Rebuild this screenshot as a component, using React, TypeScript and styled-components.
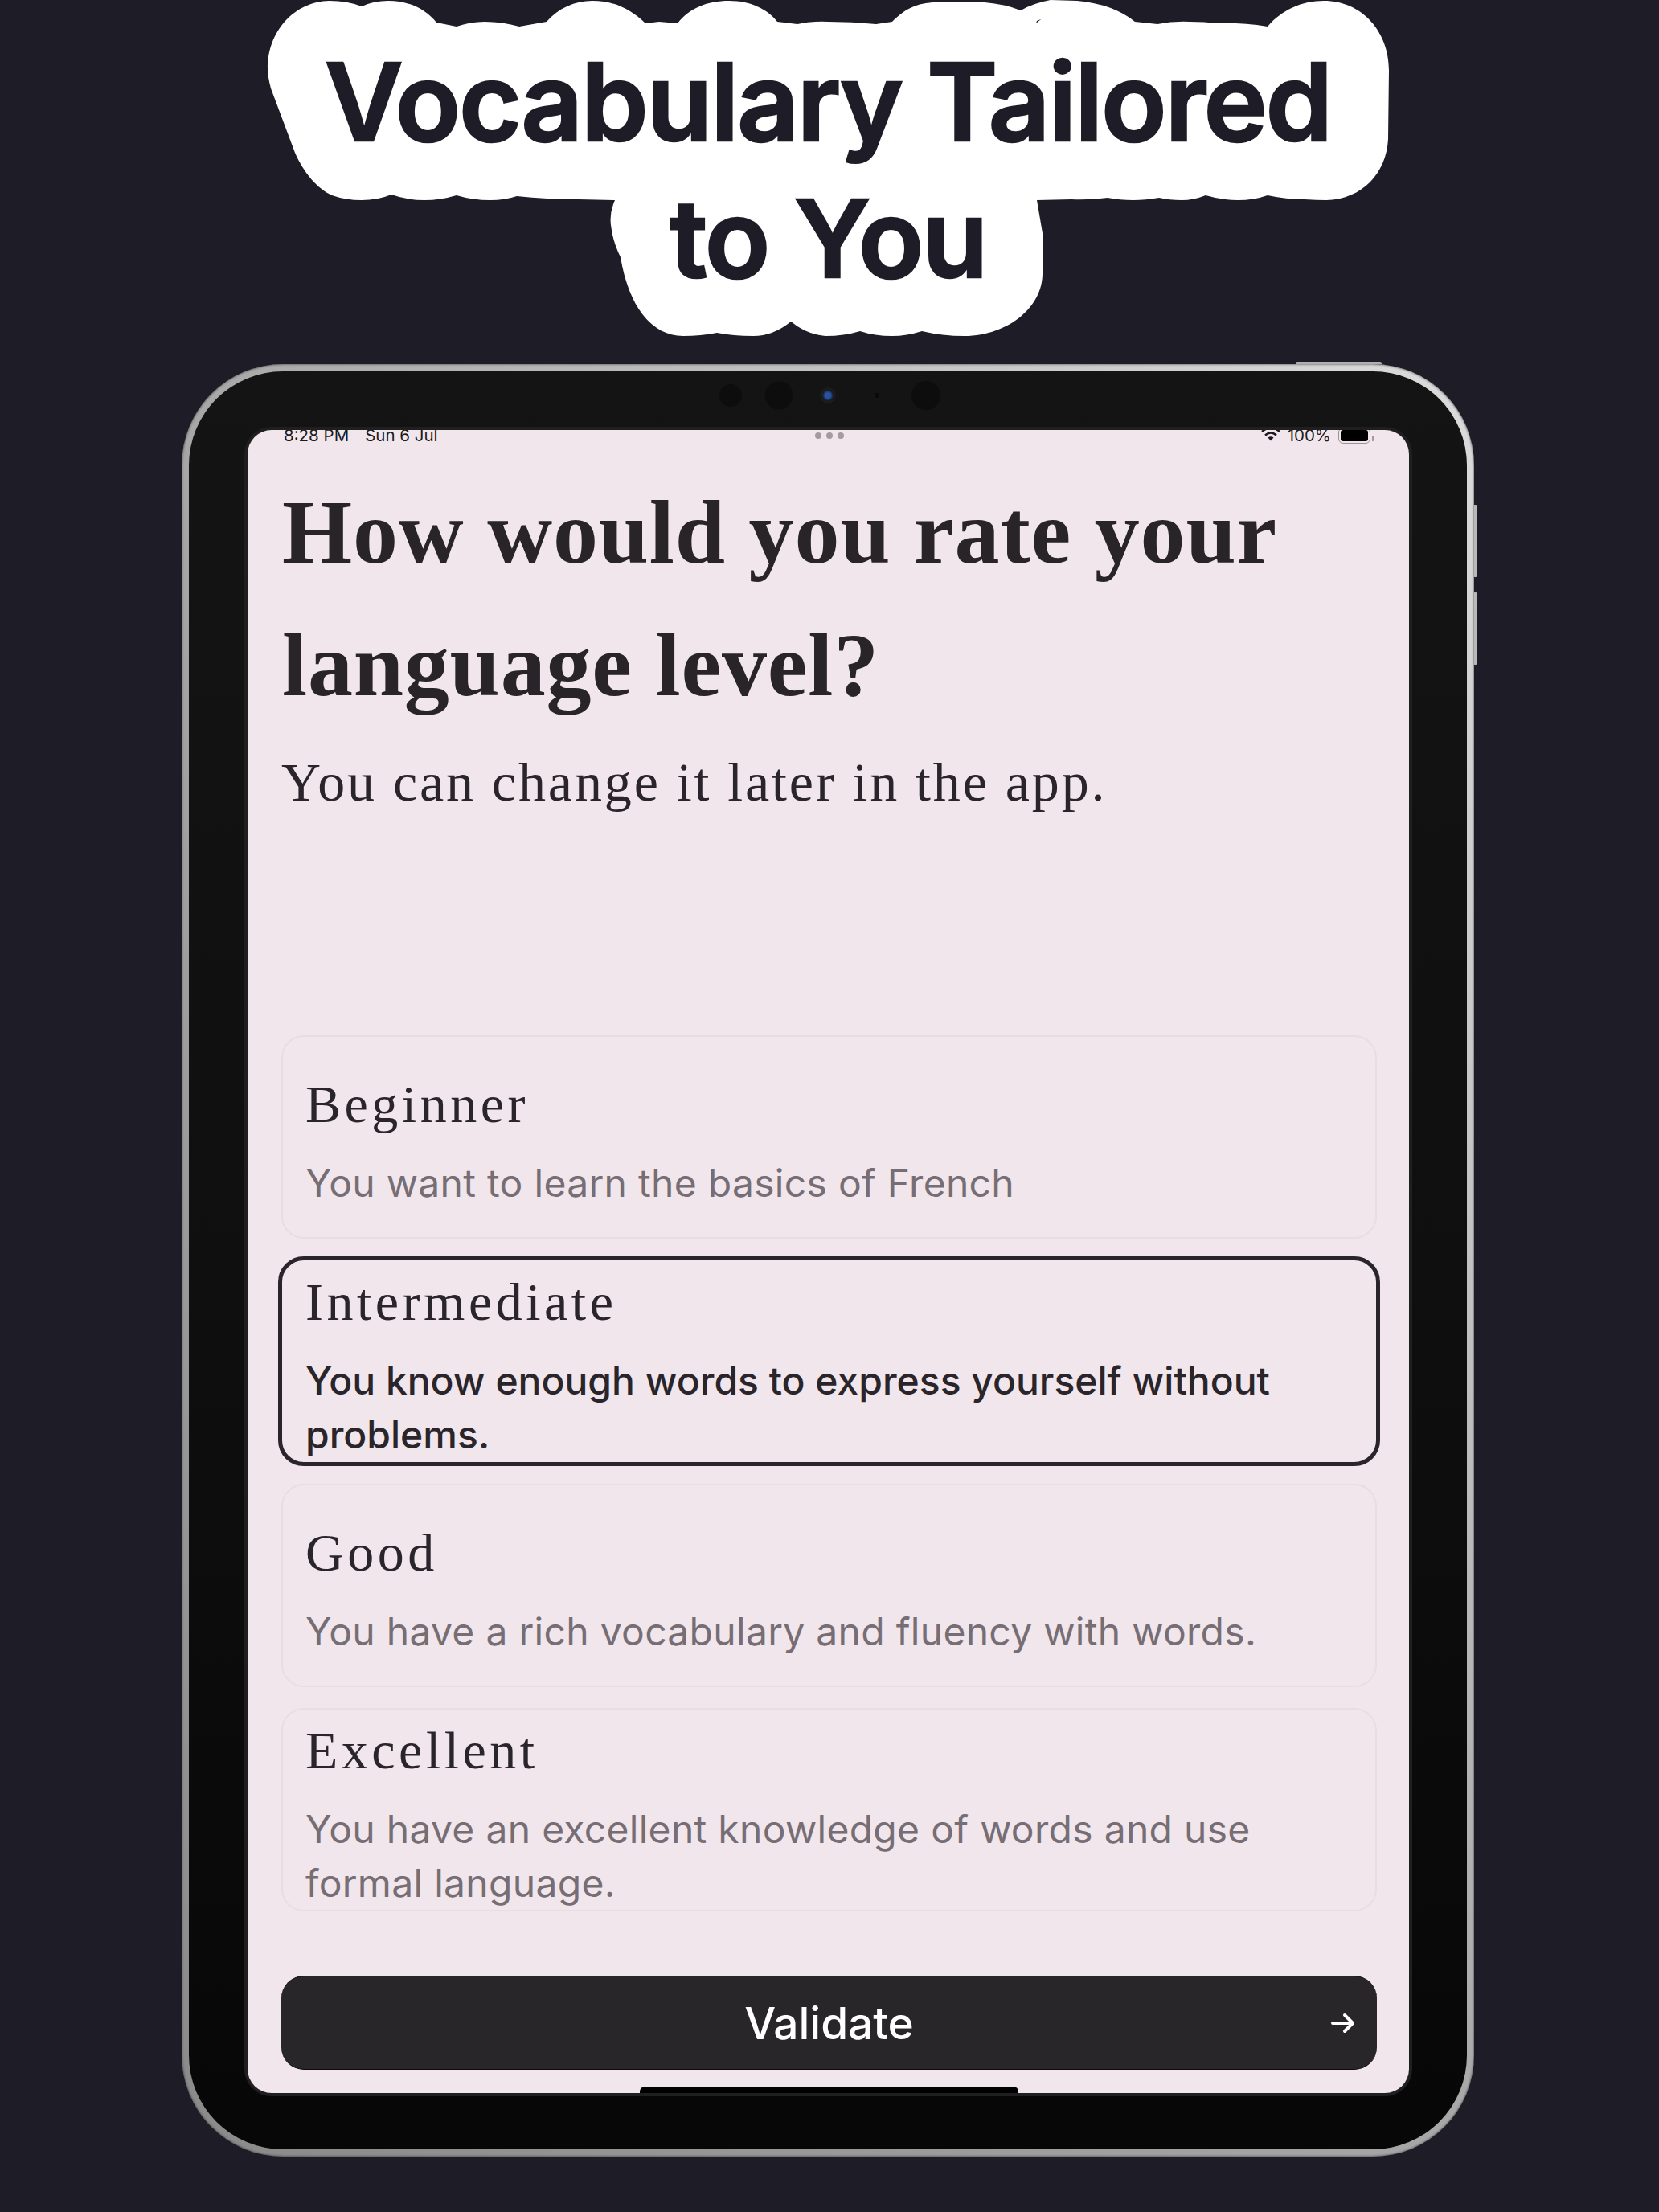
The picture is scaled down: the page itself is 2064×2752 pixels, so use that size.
import styled, { createGlobalStyle } from 'styled-components';

const GlobalStyle = createGlobalStyle`
  html, body {
    margin: 0;
    padding: 0;
    background: #1e1c26;
  }
  * {
    box-sizing: border-box;
  }
`;

const Page = styled.div`
  width: 2064px;
  height: 2752px;
  overflow: hidden;
  background: #1e1c26;
  display: flex;
  flex-direction: column;
  align-items: center;
`;

const Hero = styled.header`
  position: relative;
  width: 100%;
  height: 453px;
  padding-top: 41px;
  flex-shrink: 0;
`;

const Cloud = styled.svg`
  position: absolute;
  top: 0;
  left: 0;
`;

const Title = styled.h1`
  position: relative;
  margin: 0 4px 0 0;
  font-family: Inter, 'Liberation Sans', sans-serif;
  font-size: 134px;
  line-height: 170px;
  font-weight: 600;
  letter-spacing: -2.2px;
  text-align: center;
  color: #1e1c26;
  -webkit-text-stroke: 2.5px #1e1c26;
`;

const Device = styled.div`
  position: relative;
  width: 1608px;
  height: 2230px;
  margin-right: 4px;
  flex-shrink: 0;
  padding: 9px;
  border-radius: 126px;
  background: linear-gradient(to bottom left, #dcdcdc, #a8a8a8 50%, #8a8a8a);
  box-shadow: inset 0 0 3px rgba(40, 40, 40, 0.9);
`;

const SideButton = styled.span<{ $top: number }>`
  position: absolute;
  right: -4px;
  top: ${({ $top }) => $top}px;
  width: 4px;
  height: 90px;
  border-radius: 0 2px 2px 0;
  background: #b9b9b9;
`;

const TopButton = styled.span`
  position: absolute;
  top: -3px;
  left: 1386px;
  width: 107px;
  height: 3px;
  border-radius: 2px 2px 0 0;
  background: #b0b0b0;
`;

const Bezel = styled.div`
  position: relative;
  height: 100%;
  padding: 73px 72px 70px 73px;
  border-radius: 117px;
  background: linear-gradient(to bottom, #141414, #0f0f0f 50%, #070707);
`;

const Sensors = styled.svg`
  position: absolute;
  top: 10px;
  left: 658px;
`;

const Screen = styled.main`
  position: relative;
  height: 100%;
  display: flex;
  flex-direction: column;
  padding: 0 40px 29px 42px;
  overflow: hidden;
  border-radius: 30px;
  background: #f1e6ec;
  box-shadow: 0 0 0 4px #1f1f1f;
  color: #29252b;
`;

const StatusBar = styled.div`
  display: flex;
  justify-content: space-between;
  align-items: flex-start;
  height: 17px;
  margin: -3px 3px 0 3px;
  font-family: Inter, 'Liberation Sans', sans-serif;
  font-size: 20.5px;
  line-height: 20px;
  color: #1c1a1e;
`;

const StatusGroup = styled.div<{ $gap: number }>`
  display: flex;
  align-items: flex-start;
  gap: ${({ $gap }) => $gap}px;
`;

const Battery = styled.div`
  display: flex;
  align-items: center;
  gap: 2px;
`;

const BatteryBody = styled.span`
  display: block;
  width: 40px;
  height: 20px;
  padding: 2px;
  border: 1px solid #9c9398;
  border-radius: 6px;
  &::after {
    content: '';
    display: block;
    height: 100%;
    border-radius: 3px;
    background: #000;
  }
`;

const BatteryNub = styled.span`
  display: block;
  width: 3px;
  height: 7px;
  margin-top: 6px;
  border-radius: 0 2px 2px 0;
  background: #a59aa0;
`;

const MoreDots = styled.div`
  position: absolute;
  top: 3px;
  left: 50%;
  display: flex;
  gap: 6px;
  margin-left: 1px;
  transform: translateX(-50%);
  span {
    width: 8px;
    height: 8px;
    border-radius: 50%;
    background: #a59aa0;
  }
`;

const Heading = styled.h2`
  margin: 31px 0 0 1px;
  font-family: 'Liberation Serif', serif;
  font-size: 112px;
  line-height: 165px;
  font-weight: 700;
  letter-spacing: 0.8px;
  color: #282428;
`;

const Subheading = styled.p`
  margin: 23px 0 0 0;
  font-family: 'Liberation Serif', serif;
  font-size: 68px;
  line-height: 80px;
  letter-spacing: 2.9px;
`;

const OptionList = styled.div`
  display: flex;
  flex-direction: column;
  gap: 26px;
  margin-top: auto;
`;

const Option = styled.div<{ $selected?: boolean }>`
  display: flex;
  flex-direction: column;
  justify-content: center;
  height: 253px;
  padding: 10px 30px 0 28px;
  border-radius: 28px;
  border: 2px solid ${({ $selected }) => ($selected ? 'transparent' : '#e8dde3')};
  outline: ${({ $selected }) => ($selected ? '5px solid #29252b' : 'none')};
  outline-offset: -1px;
`;

const OptionLabel = styled.div`
  font-family: 'Liberation Serif', serif;
  font-size: 66px;
  line-height: 80px;
  letter-spacing: 4.5px;
`;

const OptionText = styled.div<{ $selected?: boolean }>`
  margin-top: 24px;
  font-family: Inter, 'Liberation Sans', sans-serif;
  font-size: 48px;
  line-height: 67px;
  font-weight: ${({ $selected }) => ($selected ? 500 : 400)};
  letter-spacing: ${({ $selected }) => ($selected ? 0 : 0.3)}px;
  color: ${({ $selected }) => ($selected ? '#29252b' : '#766e74')};
`;

const ValidateButton = styled.button`
  display: grid;
  grid-template-columns: 1fr auto 1fr;
  align-items: center;
  width: 100%;
  height: 117px;
  margin-top: 80px;
  padding: 0 27px;
  border: none;
  border-top: 1px solid #0c0c0c;
  border-bottom: 1px solid #0c0c0c;
  border-radius: 28px;
  background: #282628;
  font-family: Inter, 'Liberation Sans', sans-serif;
  font-size: 55px;
  font-weight: 500;
  color: #fff;
`;

const ButtonLabel = styled.span`
  grid-column: 2;
`;

const ButtonArrow = styled.svg`
  grid-column: 3;
  justify-self: end;
`;

const HomeIndicator = styled.div`
  position: absolute;
  bottom: 0;
  left: 488px;
  width: 471px;
  height: 8px;
  border-radius: 6px 6px 0 0;
  background: #000;
`;

const options = [
  { label: 'Beginner', text: 'You want to learn the basics of French' },
  {
    label: 'Intermediate',
    text: 'You know enough words to express yourself without problems.',
    selected: true,
  },
  { label: 'Good', text: 'You have a rich vocabulary and fluency with words.' },
  {
    label: 'Excellent',
    text: 'You have an excellent knowledge of words and use formal language.',
  },
];

const cloudPath = `M333 85 C333 40 365 2 410 1 Q432 1 450 8 Q465 1 483 1 C510 1 530 12 543 28 L568 33 Q585 27 603 27
  Q625 27 646 33 L680 27 C695 10 715 1 737 1 C765 1 785 12 803 29 L820 27 L843 29 C858 10 880 1 907 1 C935 1 955 12 967 27
  L992 30 Q1010 26 1030 27 Q1060 27 1090 30 L1110 27 C1125 12 1140 3 1165 3 L1225 3 Q1250 5 1270 13 Q1285 4 1307 0 L1340 1
  Q1385 5 1412 27 L1440 30 Q1460 26 1480 27 Q1500 27 1513 29 Q1545 28 1577 33 C1595 12 1620 1 1647 1 C1695 1 1728 40 1728 87
  L1727 173 C1725 215 1695 248 1650 249 Q1638 249 1623 248 Q1600 248 1577 243 Q1560 249 1540 249 Q1520 249 1500 243
  Q1485 249 1470 249 Q1455 249 1442 246 Q1425 249 1410 249 Q1393 249 1378 246 Q1355 249 1333 248 L1290 249 L1297 290 L1297 340
  C1297 385 1250 418 1200 418 Q1172 418 1147 412 Q1128 418 1110 418 Q1088 418 1070 412 Q1050 418 1027 418 Q1003 416 984 400
  Q962 418 937 418 Q912 418 892 414 Q872 418 850 418 C810 418 782 380 772 320 Q762 300 760 280 Q758 265 765 249 L720 248
  Q680 248 643 244 Q628 249 610 249 Q588 249 568 243 Q548 249 528 249 Q506 249 487 242 Q470 249 450 249 Q430 249 413 243
  C395 235 378 215 367 190 L337 110 Q333 95 333 85 Z M1289 29 L1295 24 L1290 26 Z`;

export default function App() {
  return (
    <>
      <GlobalStyle />
      <Page>
        <Hero>
          <Cloud width="2064" height="453" viewBox="0 0 2064 453">
            <path d={cloudPath} fill="#fff" fillRule="evenodd" />
          </Cloud>
          <Title>
            Vocabulary Tailored
            <br />
            to You
          </Title>
        </Hero>
        <Device>
          <TopButton />
          <SideButton $top={175} />
          <SideButton $top={284} />
          <Bezel>
            <Sensors width="280" height="40" viewBox="0 0 280 40">
              <defs>
                <radialGradient id="lens">
                  <stop offset="0" stopColor="#7a2a8a" />
                  <stop offset="0.5" stopColor="#1b5aa8" />
                  <stop offset="1" stopColor="#12305c" />
                </radialGradient>
              </defs>
              <circle cx="16" cy="20" r="14" fill="#0d0d0d" />
              <circle cx="76" cy="20" r="17.5" fill="#0d0d0d" />
              <circle cx="137" cy="20" r="10" fill="#1c1c1e" />
              <circle cx="137" cy="20" r="6" fill="url(#lens)" />
              <circle cx="198" cy="20" r="3" fill="#0a0a0a" />
              <circle cx="259" cy="20" r="18" fill="#0d0d0d" />
            </Sensors>
            <Screen>
              <StatusBar>
                <StatusGroup $gap={20}>
                  <span>8:28 PM</span>
                  <span>Sun 6 Jul</span>
                </StatusGroup>
                <StatusGroup $gap={9}>
                  <svg width="24" height="18" viewBox="0 0 24 18" fill="none" stroke="#1c1a1e" strokeWidth="2.4">
                    <path d="M1 5 Q12 -4 23 5" />
                    <path d="M5 9.5 Q12 3.5 19 9.5" />
                    <path d="M8.5 12.5 Q12 10 15.5 12.5 L12 16.5 Z" fill="#1c1a1e" stroke="none" />
                  </svg>
                  <span>100%</span>
                  <Battery>
                    <BatteryBody />
                    <BatteryNub />
                  </Battery>
                </StatusGroup>
              </StatusBar>
              <MoreDots>
                <span />
                <span />
                <span />
              </MoreDots>
              <Heading>
                How would you rate your
                <br />
                language level?
              </Heading>
              <Subheading>You can change it later in the app.</Subheading>
              <OptionList>
                {options.map((o) => (
                  <Option key={o.label} $selected={o.selected}>
                    <OptionLabel>{o.label}</OptionLabel>
                    <OptionText $selected={o.selected}>{o.text}</OptionText>
                  </Option>
                ))}
              </OptionList>
              <ValidateButton>
                <ButtonLabel>Validate</ButtonLabel>
                <ButtonArrow width="30" height="26" viewBox="0 0 30 26" fill="none" stroke="#fff" strokeWidth="4" strokeLinecap="round" strokeLinejoin="round">
                  <path d="M2 13 H27 M17 3 L27 13 L17 23" />
                </ButtonArrow>
              </ValidateButton>
              <HomeIndicator />
            </Screen>
          </Bezel>
        </Device>
      </Page>
    </>
  );
}
